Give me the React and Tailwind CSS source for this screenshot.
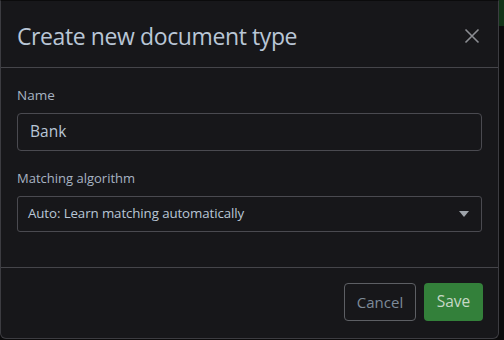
import React from 'react';

const App = () => {
  return (
    <div className="w-[504px] h-[340px] bg-[#0b0b0c] flex overflow-hidden" style={{ fontFamily: '"Open Sans", "Noto Sans", sans-serif' }}>
      <div className="w-[499px] h-[339px] flex flex-col bg-[#17171a] border border-[#3c3c41] border-t-[#0b0b0c] rounded-b-md">
        <div className="h-[67px] flex items-center justify-between pl-[16px] pr-[18px] border-b border-[#45454a]">
          <h4 className="text-[23px] text-[#b9c6d6] leading-none tracking-[-0.4px] mt-[4px]">Create new document type</h4>
          <button className="text-[#8b8d92] mt-[3px]">
            <svg width="16" height="16" viewBox="0 0 16 16" fill="none" stroke="currentColor" strokeWidth="1.6">
              <path d="M1.5 1.5l13 13M14.5 1.5l-13 13" />
            </svg>
          </button>
        </div>

        <div className="flex-1 px-[16px] pt-[21px] border-b border-[#45454a]">
          <label className="block text-[13.5px] text-[#a7b3c2] leading-none mb-[10px]">Name</label>
          <div className="h-[38px] flex items-center px-[12px] border border-[#4a4a50] rounded-[4px] text-[15.5px] text-[#b9c6d6]">
            Bank
          </div>

          <label className="block text-[13px] text-[#a7b3c2] leading-none mt-[21px] mb-[11px]">Matching algorithm</label>
          <div className="h-[36px] flex items-center justify-between pl-[10px] pr-[12px] border border-[#4a4a50] rounded-[3px] text-[13.3px] tracking-[-0.1px] text-[#b9c6d6]">
            <span>Auto: Learn matching automatically</span>
            <svg width="10" height="6" viewBox="0 0 10 6" fill="#9ea3aa">
              <path d="M0 0h10L5 6z" />
            </svg>
          </div>
        </div>

        <div className="h-[70px] flex items-center justify-end gap-[8px] pr-[15px] pb-[2px]">
          <button className="h-[38px] w-[72px] border border-[#5d5f64] rounded-[4px] text-[15px] text-[#7d8a98]">Cancel</button>
          <button className="h-[38px] w-[59px] bg-[#33803a] rounded-[4px] text-[15.5px] text-[#c6d8c6]">Save</button>
        </div>
      </div>
      <div className="flex-1 flex flex-col">
        <div className="h-[26px] bg-[#123418]" />
      </div>
    </div>
  );
};

export default App;
